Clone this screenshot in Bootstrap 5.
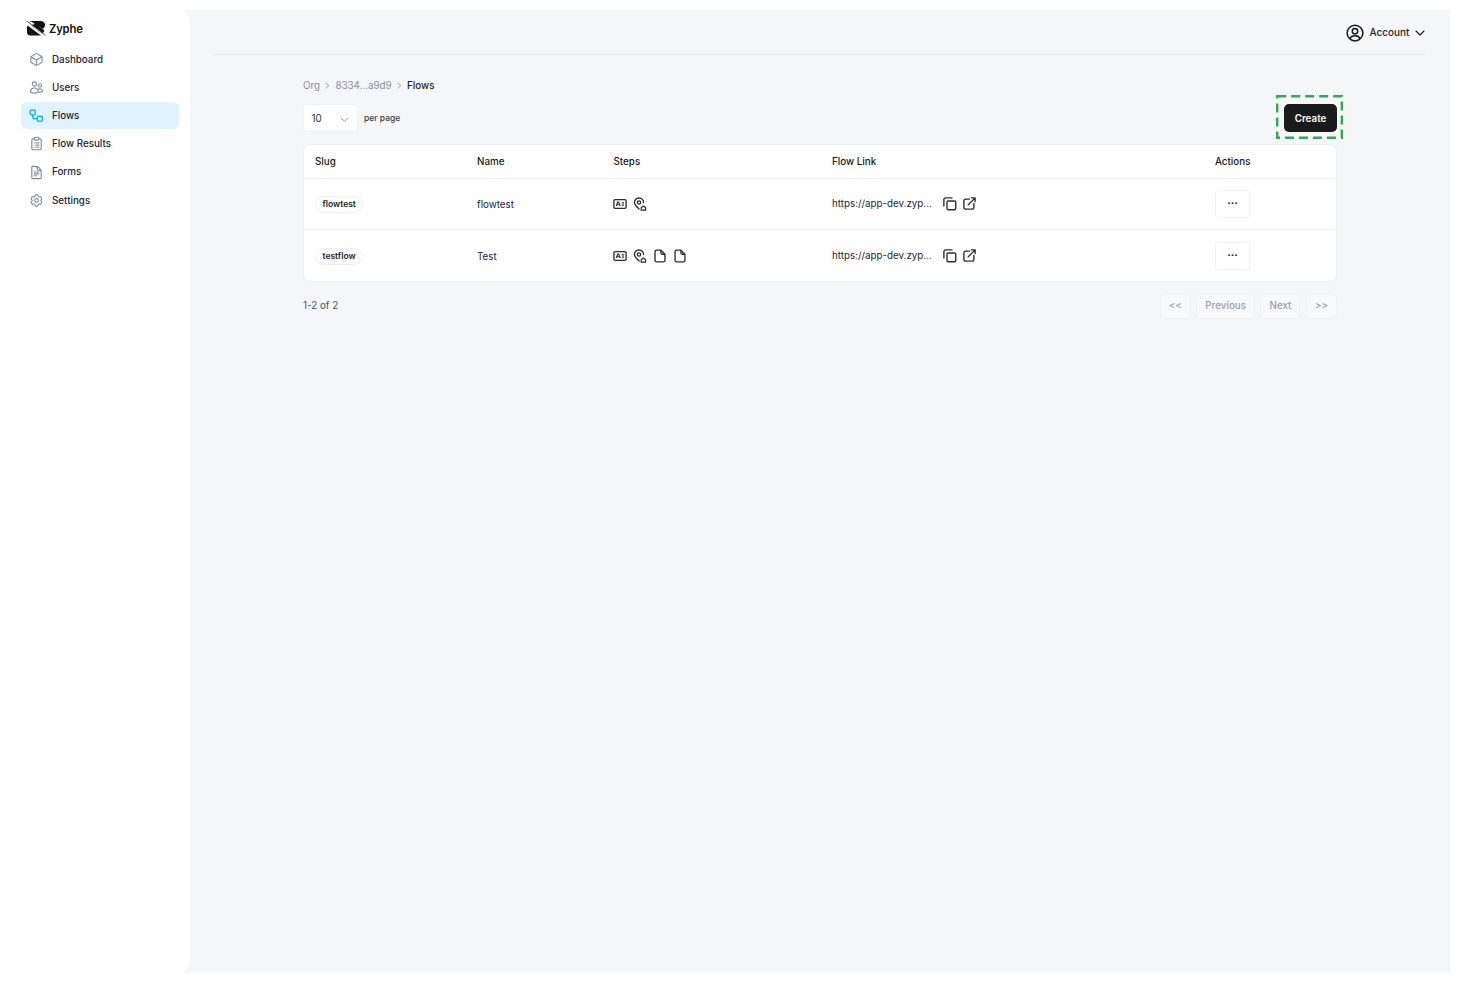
<!DOCTYPE html>
<html lang="en">
<head>
  <meta charset="UTF-8">
  <meta name="viewport" content="width=device-width, initial-scale=1">
  <title>Zyphe - Flows</title>
  <link href="https://cdn.jsdelivr.net/npm/bootstrap@5.3.3/dist/css/bootstrap.min.css" rel="stylesheet">
  <style>
    html, body { height: 100%; }
    body { background: #fff; font-family: Inter, "Liberation Sans", sans-serif; color: #1b1d24; font-size: 9.8px; }
    .app-shell { height: 963px; margin: 10px 10px 10px 0; }
    .side-panel { width: 190px; flex: none; background: #fff; border-radius: 0 12px 12px 0; padding: 11px 11px 0 21px; z-index: 1; }
    .brand-row { height: 15px; gap: 3px; margin: 0 0 10px 6px; }
    .brand-name { font-size: 11.3px; font-weight: 600; letter-spacing: -.2px; color: #111; padding-top: 1px; }
    .side-link { height: 27px; margin-bottom: 1.2px; padding: 1px 9px 0 8px; gap: 8px; border-radius: 6px; color: #1f2430; font-weight: 500; font-size: 9.8px; text-decoration: none; }
    .side-link svg { width: 15px; height: 15px; color: #868b9b; flex: none; margin-top: -1.5px; }
    .side-link.is-active { background: #def3fd; }
    .side-link.is-active svg { color: #1fb2f0; }
    .main-panel { flex: 1; margin-left: -7px; padding-left: 7px; background: #f5f6f8; }
    .top-bar { height: 45px; padding-top: 1px; margin: 0 25px 0 22px; border-bottom: 1px solid #e9eaee; }
    .account-link { gap: 5.5px; font-size: 10px; font-weight: 500; color: #1f2430; }
    .content-area { width: 1034px; margin: 0 0 0 113px; padding-top: 24px; }
    .crumbs { font-size: 9.8px; line-height: 13px; gap: 4.2px; color: #8b8f9b; margin-bottom: 12px; }
    .crumbs .here { color: #1f2430; font-weight: 500; }
    .crumbs svg { width: 7px; height: 7px; }
    .per-select { width: 55px; height: 28px; padding: 2px 9px 0 7.5px; border-radius: 4px; background: #fff; font-size: 9.8px; color: #2a2d36; border: 1px solid #f0f1f3; }
    .per-select svg { width: 9px; height: 9px; color: #8b8f9b; margin-right: -1px; }
    .per-label { font-size: 8.5px; font-weight: 500; color: #3a3d47; margin-left: 6px; padding-top: 1px; }
    .create-wrap { position: relative; }
    .create-wrap svg { position: absolute; left: -8px; top: -9px; width: 67px; height: 44px; pointer-events: none; }
    .create-btn { width: 53px; height: 28px; padding: 2px 0 0; background: #1a1a1a; color: #fff; border: 0; border-radius: 5px; font-size: 9.8px; font-weight: 600; }
    .flows-card { margin-top: 12px; background: #fff; border: 1px solid #eceef1; border-radius: 8px; overflow: hidden; }
    .flows-table { table-layout: fixed; margin: 0; width: 100%; --bs-table-bg: transparent; }
    .flows-table th, .flows-table td { padding: 0 0 0 11px; vertical-align: middle; border-color: #eff0f3; font-size: 9.8px; color: #22252e; }
    .flows-table th { height: 33px; padding-top: 3px; font-weight: 500; color: #15171d; }
    .flows-table td { height: 51.5px; }
    .flows-table td.plain-cell { padding-top: 3px; }
    .flows-table td.pill-cell { padding-top: 1px; }
    .flows-table tr:last-child td { border-bottom: 0; }
    .flows-table th:nth-child(1) { width: 162px; }
    .flows-table th:nth-child(2) { width: 136.5px; }
    .flows-table th:nth-child(3) { width: 218.5px; }
    .flows-table th:nth-child(4) { width: 383px; }
    .slug-pill { display: inline-block; height: 17px; line-height: 15px; padding: 0 6.5px; border: 1px solid #eeeff2; border-radius: 9px; font-size: 8.5px; font-weight: 600; color: #1a1c22; }
    .step-row { gap: 6px; color: #2a2d36; margin-left: -1px; }
    .step-row svg { width: 14px; height: 14px; }
    .link-row svg { width: 15px; height: 15px; color: #2a2d36; }
    .link-text { width: 105.5px; white-space: nowrap; padding-top: 2px; }
    .link-row { gap: 4.5px; }
    .dots-btn { width: 35px; height: 28px; padding: 0; background: #fff; border: 1px solid #eff0f2; border-radius: 4px; font-weight: 700; font-size: 10.5px; line-height: 20px; color: #22252e; }
    .table-foot { margin-top: 11px; height: 26px; font-size: 9.8px; color: #50535e; }
    .pg-btn { height: 25px; padding: 1px 8px 0; background: #f8f9fa; border: 1px solid #f0f1f3; border-radius: 4px; color: #9a9da6; font-size: 9.8px; font-weight: 500; }
    .pg-row { gap: 5.5px; }
  </style>
</head>
<body>
<svg class="d-none">
  <symbol id="i-cube" viewBox="0 0 24 24" fill="none" stroke="currentColor" stroke-width="1.7" stroke-linecap="round" stroke-linejoin="round"><path d="m21 7.5-9-5.25L3 7.5m18 0-9 5.25m9-5.25v9l-9 5.25M3 7.5l9 5.25M3 7.5v9l9 5.25m0-9v9"/></symbol>
  <symbol id="i-users" viewBox="0 0 24 24" fill="none" stroke="currentColor" stroke-width="1.7" stroke-linecap="round" stroke-linejoin="round"><path d="M15 19.128a9.38 9.38 0 0 0 2.625.372 9.337 9.337 0 0 0 4.121-.952 4.125 4.125 0 0 0-7.533-2.493M15 19.128v-.003c0-1.113-.285-2.16-.786-3.07M15 19.128v.106A12.318 12.318 0 0 1 8.624 21c-2.331 0-4.512-.645-6.374-1.766l-.001-.109a6.375 6.375 0 0 1 11.964-3.07M12 6.375a3.375 3.375 0 1 1-6.75 0 3.375 3.375 0 0 1 6.75 0Zm8.25 2.25a2.625 2.625 0 1 1-5.25 0 2.625 2.625 0 0 1 5.25 0Z"/></symbol>
  <symbol id="i-flow" viewBox="0 0 24 24" fill="none" stroke="currentColor" stroke-width="2.4" stroke-linecap="round" stroke-linejoin="round"><rect x="2" y="3" width="8" height="8" rx="2.2"/><rect x="13" y="13" width="8.5" height="8" rx="2.2"/><path d="M6 11v3.5a2.500 2.500 0 0 0 2.500 2.500H13"/></symbol>
  <symbol id="i-clip" viewBox="0 0 24 24" fill="none" stroke="currentColor" stroke-width="1.8" stroke-linecap="round" stroke-linejoin="round"><path d="M8.500 4.500H6.600A2.100 2.100 0 0 0 4.500 6.600v13.300A2.100 2.100 0 0 0 6.600 22h10.800a2.100 2.100 0 0 0 2.100-2.100V6.600a2.100 2.100 0 0 0-2.100-2.100h-1.900"/><rect x="8.500" y="2" width="7" height="4.500" rx="1.200"/><path d="M8 11h.01M8 14.500h.01M8 18h.01M11 11h5M11 14.500h5M11 18h5"/></symbol>
  <symbol id="i-doc" viewBox="0 0 24 24" fill="none" stroke="currentColor" stroke-width="1.8" stroke-linecap="round" stroke-linejoin="round"><path d="M19.500 14.250v-2.625a3.375 3.375 0 0 0-3.375-3.375h-1.500A1.125 1.125 0 0 1 13.500 7.125v-1.500a3.375 3.375 0 0 0-3.375-3.375H8.250m0 9h7.500m-7.500 3h7.500m-7.500 3H12M10.500 2.250H5.625c-.621 0-1.125.504-1.125 1.125v17.250c0 .621.504 1.125 1.125 1.125h12.750c.621 0 1.125-.504 1.125-1.125V11.250a9 9 0 0 0-9-9Z"/></symbol>
  <symbol id="i-cog" viewBox="0 0 24 24" fill="none" stroke="currentColor" stroke-width="1.7" stroke-linecap="round" stroke-linejoin="round"><path d="M9.594 3.94c.09-.542.56-.94 1.11-.94h2.593c.55 0 1.02.398 1.11.94l.213 1.281c.063.374.313.686.645.87.074.04.147.083.22.127.325.196.72.257 1.075.124l1.217-.456a1.125 1.125 0 0 1 1.37.49l1.296 2.247a1.125 1.125 0 0 1-.26 1.431l-1.003.827c-.293.241-.438.613-.43.992a7.723 7.723 0 0 1 0 .255c-.008.378.137.75.43.991l1.004.827c.424.35.534.955.26 1.43l-1.298 2.247a1.125 1.125 0 0 1-1.369.491l-1.217-.456c-.355-.133-.75-.072-1.076.124a6.47 6.47 0 0 1-.22.128c-.331.183-.581.495-.644.869l-.213 1.281c-.09.543-.56.94-1.11.94h-2.594c-.55 0-1.019-.398-1.11-.94l-.213-1.281c-.062-.374-.312-.686-.644-.87a6.52 6.52 0 0 1-.22-.127c-.325-.196-.72-.257-1.076-.124l-1.217.456a1.125 1.125 0 0 1-1.369-.49l-1.297-2.247a1.125 1.125 0 0 1 .26-1.431l1.004-.827c.292-.24.437-.613.43-.991a6.932 6.932 0 0 1 0-.255c.007-.38-.138-.751-.43-.992l-1.004-.827a1.125 1.125 0 0 1-.26-1.43l1.297-2.247a1.125 1.125 0 0 1 1.37-.491l1.216.456c.356.133.751.072 1.076-.124.072-.044.146-.086.22-.128.332-.183.582-.495.644-.869l.214-1.28Z"/><path d="M15 12a3 3 0 1 1-6 0 3 3 0 0 1 6 0Z"/></symbol>
  <symbol id="i-card" viewBox="0 0 24 24" fill="none" stroke="currentColor" stroke-width="2.300"><rect x="1.500" y="4.500" width="21" height="15" rx="2.200"/><path d="M5.500 15.500 8 8.800h1.800l2.500 6.700M6.600 13.200h4.600" stroke-width="1.900"/><path d="M15 10h4M15 14h4" stroke-width="2"/></symbol>
  <symbol id="i-pin" viewBox="0 0 24 24" fill="none" stroke="currentColor" stroke-width="2.300" stroke-linecap="round" stroke-linejoin="round"><path d="M10.500 20.500C6.500 17 2.500 13.500 2.500 9.500a7.800 7.800 0 0 1 15.600 0"/><circle cx="10.300" cy="9.500" r="2.800"/><path d="M14 22.500v-4l3.800-3 3.800 3v4z" stroke-width="2"/></symbol>
  <symbol id="i-page" viewBox="0 0 24 24" fill="none" stroke="currentColor" stroke-width="2.300" stroke-linejoin="round"><path d="M13.500 2H6a2.500 2.500 0 0 0-2.500 2.500v15A2.500 2.500 0 0 0 6 22h12a2.500 2.500 0 0 0 2.500-2.500V9z"/><path d="M13.500 2v4.500a2.500 2.500 0 0 0 2.500 2.500h4.500"/></symbol>
  <symbol id="i-copy" viewBox="0 0 24 24" fill="none" stroke="currentColor" stroke-width="2.200" stroke-linecap="round" stroke-linejoin="round"><rect x="8" y="8" width="14" height="14" rx="2"/><path d="M16 3H6a3 3 0 0 0-3 3v10"/></symbol>
  <symbol id="i-ext" viewBox="0 0 24 24" fill="none" stroke="currentColor" stroke-width="2.200" stroke-linecap="round" stroke-linejoin="round"><path d="M12 5H6a3 3 0 0 0-3 3v10a3 3 0 0 0 3 3h10a3 3 0 0 0 3-3v-6"/><path d="M10 14 21 3m-6 0h6v6"/></symbol>
</svg>

<div class="app-shell d-flex">
  <aside class="side-panel position-relative">
    <div class="brand-row d-flex align-items-center">
      <svg width="19" height="15" viewBox="0 0 19 15"><path d="M2 0h12a4 4 0 0 1 3.600 5.800L16 8 4.500 0.800z" fill="#111"/><path d="M0.500 4.500 14 14.500H3.500A3.500 3.500 0 0 1 0 11V6z" fill="#111"/><path d="M9 2.800 17.500 9.500 16 12a3.500 3.500 0 0 1-1 1.200L3.500 4.300z" fill="#111"/><path d="M0 1l18 13.500" stroke="#fff" stroke-width="1.200"/><path d="M0 .2l18.500 14.300" stroke="#111" stroke-width=".7"/></svg>
      <span class="brand-name">Zyphe</span>
    </div>
    <nav class="nav flex-column">
      <a class="side-link d-flex align-items-center" href="#"><svg><use href="#i-cube"/></svg>Dashboard</a>
      <a class="side-link d-flex align-items-center" href="#"><svg><use href="#i-users"/></svg>Users</a>
      <a class="side-link is-active d-flex align-items-center" href="#"><svg><use href="#i-flow"/></svg>Flows</a>
      <a class="side-link d-flex align-items-center" href="#"><svg><use href="#i-clip"/></svg>Flow Results</a>
      <a class="side-link d-flex align-items-center" href="#"><svg><use href="#i-doc"/></svg>Forms</a>
      <a class="side-link d-flex align-items-center" href="#"><svg><use href="#i-cog"/></svg>Settings</a>
    </nav>
  </aside>

  <main class="main-panel">
    <div class="top-bar d-flex justify-content-end align-items-center">
      <div class="account-link d-flex align-items-center">
        <svg width="18" height="18" viewBox="0 0 24 24" fill="none" stroke="#16181f" stroke-width="2"><circle cx="12" cy="12" r="10.500"/><circle cx="12" cy="9.500" r="3.600"/><path d="M5.200 19.500c1-2.600 3.600-4 6.800-4s5.800 1.400 6.800 4"/></svg>
        <span>Account</span>
        <svg width="10" height="10" viewBox="0 0 10 10" fill="none" stroke="#16181f" stroke-width="1.100" stroke-linecap="round" stroke-linejoin="round"><path d="M1 3l4 4 4-4"/></svg>
      </div>
    </div>

    <div class="content-area">
      <div class="crumbs d-flex align-items-center">
        <span>Org</span>
        <svg viewBox="0 0 8 8" fill="none" stroke="currentColor" stroke-width="1"><path d="M2 .8 5.500 4 2 7.200"/></svg>
        <span>8334...a9d9</span>
        <svg viewBox="0 0 8 8" fill="none" stroke="currentColor" stroke-width="1"><path d="M2 .8 5.500 4 2 7.200"/></svg>
        <span class="here">Flows</span>
      </div>

      <div class="d-flex justify-content-between align-items-center">
        <div class="d-flex align-items-center">
          <div class="per-select d-flex align-items-center justify-content-between">
            <span>10</span>
            <svg viewBox="0 0 10 10" fill="none" stroke="currentColor" stroke-width="1" stroke-linecap="round" stroke-linejoin="round"><path d="M1.500 3.500 5 7l3.500-3.500"/></svg>
          </div>
          <span class="per-label">per page</span>
        </div>
        <div class="create-wrap">
          <button class="btn create-btn" type="button">Create</button>
          <svg viewBox="0 0 67 44" fill="none" stroke="#34a853" stroke-width="2.400"><rect x="1.200" y="1.200" width="64.600" height="41.600" stroke-dasharray="9 5"/></svg>
        </div>
      </div>

      <div class="flows-card">
        <table class="table flows-table">
          <thead>
            <tr><th>Slug</th><th>Name</th><th>Steps</th><th>Flow Link</th><th>Actions</th></tr>
          </thead>
          <tbody>
            <tr>
              <td class="pill-cell"><span class="slug-pill">flowtest</span></td>
              <td class="plain-cell">flowtest</td>
              <td><div class="step-row d-flex align-items-center">
                <svg><use href="#i-card"/></svg><svg><use href="#i-pin"/></svg>
              </div></td>
              <td><div class="link-row d-flex align-items-center">
                <span class="link-text">https://app-dev.zyp...</span>
                <svg><use href="#i-copy"/></svg><svg><use href="#i-ext"/></svg>
              </div></td>
              <td><button class="btn dots-btn" type="button">···</button></td>
            </tr>
            <tr>
              <td class="pill-cell"><span class="slug-pill">testflow</span></td>
              <td class="plain-cell">Test</td>
              <td><div class="step-row d-flex align-items-center">
                <svg><use href="#i-card"/></svg><svg><use href="#i-pin"/></svg><svg><use href="#i-page"/></svg><svg><use href="#i-page"/></svg>
              </div></td>
              <td><div class="link-row d-flex align-items-center">
                <span class="link-text">https://app-dev.zyp...</span>
                <svg><use href="#i-copy"/></svg><svg><use href="#i-ext"/></svg>
              </div></td>
              <td><button class="btn dots-btn" type="button">···</button></td>
            </tr>
          </tbody>
        </table>
      </div>

      <div class="table-foot d-flex justify-content-between align-items-center">
        <span>1-2 of 2</span>
        <div class="pg-row d-flex">
          <button class="btn pg-btn" type="button">&lt;&lt;</button>
          <button class="btn pg-btn" type="button">Previous</button>
          <button class="btn pg-btn" type="button">Next</button>
          <button class="btn pg-btn" type="button">&gt;&gt;</button>
        </div>
      </div>
    </div>
  </main>
</div>

<script src="https://cdn.jsdelivr.net/npm/bootstrap@5.3.3/dist/js/bootstrap.bundle.min.js"></script>
</body>
</html>
